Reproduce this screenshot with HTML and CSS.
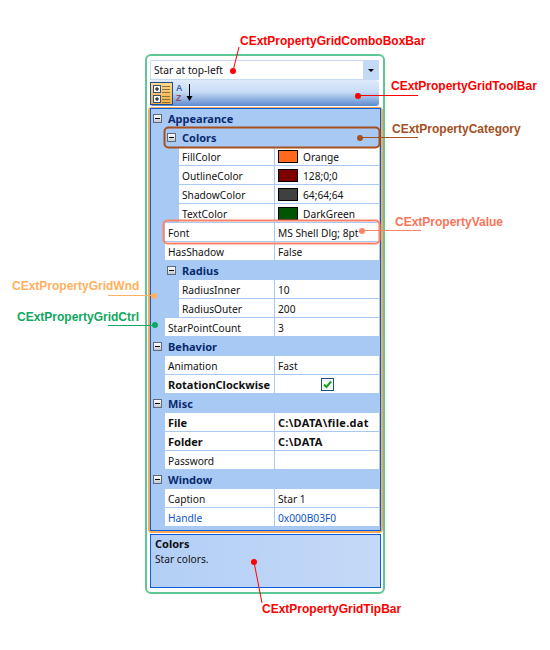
FILE: index.html
```html
<html>
    <head>
        <title>Property Grid</title>
        <meta name="viewport" content="width=device-width, initial-scale=1.0">
        <link rel="stylesheet" href="styles.css">
    </head>
    <body>
        <div class="page">
            <div class="frame">
                <div class="combo">
                    <span class="combo-text">Star at top-left</span>
                    <span class="combo-btn"><i class="combo-arrow"></i></span>
                </div>
                <div class="toolbar">
                    <span class="tool-btn">
                        <svg width="21" height="21" viewBox="0 0 21 21">
                            <rect x="2.500" y="2.500" width="7" height="7" fill="#fff" stroke="#33507a"/>
                            <path d="M4 6h4M6 4v4" stroke="#000"/>
                            <rect x="2.500" y="12.500" width="7" height="7" fill="#fff" stroke="#33507a"/>
                            <path d="M4 16h4M6 14v4" stroke="#000"/>
                            <path d="M11 3.500h8M11 6.500h8M11 9.500h8M11 13.500h8M11 16.500h8M11 19.500h8" stroke="#8a7440"/>
                        </svg>
                    </span>
                    <span class="sort-letters">
                        <span class="sort-a">A</span>
                        <span class="sort-z">Z</span>
                    </span>
                    <svg class="sort-arrow" width="7" height="18" viewBox="0 0 7 18">
                        <path d="M3.500 0v14" stroke="#000"/>
                        <path d="M0.500 12l3 5 3-5z" fill="#000"/>
                    </svg>
                </div>
                <div class="grid-wnd">
                    <div class="grid">
                        <div class="row cat"><b class="toggle"></b><span>Appearance</span></div>
                        <div class="row cat sub"><b class="toggle"></b><span>Colors</span></div>
                        <div class="row deep"><span class="name">FillColor</span><span class="value"><i class="swatch orange"></i>Orange</span></div>
                        <div class="row deep"><span class="name">OutlineColor</span><span class="value"><i class="swatch maroon"></i>128;0;0</span></div>
                        <div class="row deep"><span class="name">ShadowColor</span><span class="value"><i class="swatch gray"></i>64;64;64</span></div>
                        <div class="row deep"><span class="name">TextColor</span><span class="value"><i class="swatch green"></i>DarkGreen</span></div>
                        <div class="row"><span class="name">Font</span><span class="value">MS Shell Dlg; 8pt</span></div>
                        <div class="row"><span class="name">HasShadow</span><span class="value">False</span></div>
                        <div class="row cat sub"><b class="toggle"></b><span>Radius</span></div>
                        <div class="row deep"><span class="name">RadiusInner</span><span class="value">10</span></div>
                        <div class="row deep"><span class="name">RadiusOuter</span><span class="value">200</span></div>
                        <div class="row"><span class="name">StarPointCount</span><span class="value">3</span></div>
                        <div class="row cat"><b class="toggle"></b><span>Behavior</span></div>
                        <div class="row"><span class="name">Animation</span><span class="value">Fast</span></div>
                        <div class="row"><span class="name bold">RotationClockwise</span><span class="value center"><i class="check"><svg width="11" height="11" viewBox="0 0 11 11"><path d="M2 5.500l2.500 2.500 4.500-5.500" fill="none" stroke="#1aa31a" stroke-width="2"/></svg></i></span></div>
                        <div class="row cat"><b class="toggle"></b><span>Misc</span></div>
                        <div class="row"><span class="name bold">File</span><span class="value bold wide">C:\DATA\file.dat</span></div>
                        <div class="row"><span class="name bold">Folder</span><span class="value bold wide">C:\DATA</span></div>
                        <div class="row"><span class="name">Password</span><span class="value"></span></div>
                        <div class="row cat"><b class="toggle"></b><span>Window</span></div>
                        <div class="row"><span class="name">Caption</span><span class="value">Star 1</span></div>
                        <div class="row link"><span class="name">Handle</span><span class="value">0x000B03F0</span></div>
                    </div>
                </div>
                <div class="tipbar">
                    <div class="tip-title">Colors</div>
                    <div>Star colors.</div>
                </div>
            </div>

            <svg class="marks" width="550" height="650" viewBox="0 0 550 650">
                <rect x="164.500" y="127.500" width="215" height="20" rx="4" fill="none" stroke="#a5501f" stroke-width="2"/>
                <rect x="163.500" y="220.500" width="216" height="23" rx="4" fill="none" stroke="#ff8468" stroke-width="2"/>
                <path d="M233 71L239 47" stroke="#f00"/>
                <path d="M358 95.500H418" stroke="#f00"/>
                <path d="M360 137.500H418" stroke="#a5501f"/>
                <path d="M362 230.500H421" stroke="#ff8468"/>
                <path d="M108 295.500H154" stroke="#ffb060"/>
                <path d="M108 325.500H155" stroke="#10a860"/>
                <path d="M254 562L262 603" stroke="#f00"/>
                <circle cx="233" cy="71" r="3" fill="#f00"/>
                <circle cx="358" cy="96" r="3" fill="#f00"/>
                <circle cx="360" cy="138" r="3" fill="#a5501f"/>
                <circle cx="362" cy="231" r="3" fill="#ff8468"/>
                <circle cx="154" cy="296" r="3" fill="#ffb060"/>
                <circle cx="155" cy="325" r="3" fill="#10a860"/>
                <circle cx="254" cy="562" r="3" fill="#f00"/>
            </svg>

            <span class="label red combo-label">CExtPropertyGridComboBoxBar</span>
            <span class="label red toolbar-label">CExtPropertyGridToolBar</span>
            <span class="label brown category-label">CExtPropertyCategory</span>
            <span class="label salmon value-label">CExtPropertyValue</span>
            <span class="label amber wnd-label">CExtPropertyGridWnd</span>
            <span class="label emerald ctrl-label">CExtPropertyGridCtrl</span>
            <span class="label red tip-label">CExtPropertyGridTipBar</span>
        </div>
    </body>
</html>
```

FILE: styles.css
```css
* {
    box-sizing: border-box;
}

html, body {
    margin: 0;
    padding: 0;
    background: #fff;
}

.page {
    position: relative;
    width: 550px;
    height: 650px;
    padding: 54px 0 0 145px;
    font-family: "Noto Sans", "Liberation Sans", sans-serif;
    font-size: 10.200px;
    color: #111;
    overflow: hidden;
}

.frame {
    width: 240px;
    height: 540px;
    border: 2px solid #5fc795;
    border-radius: 6px;
    padding: 4px 3px 0 3px;
}

.combo {
    display: flex;
    align-items: stretch;
    justify-content: space-between;
    width: 229px;
    height: 20px;
    border: 1px solid #c6daf5;
    background: #fff;
}

.combo-text {
    padding: 2px 0 0 3px;
}

.combo-btn {
    display: flex;
    align-items: center;
    justify-content: center;
    width: 15px;
    background: #c3d9f6;
}

.combo-arrow {
    border-top: 3px solid #000;
    border-left: 3px solid transparent;
    border-right: 3px solid transparent;
}

.toolbar {
    display: flex;
    align-items: flex-end;
    width: 229px;
    height: 26px;
    border-radius: 3px;
    background: linear-gradient(#dfeafb, #c9dcf6 45%, #5d8bd0);
}

.tool-btn {
    display: flex;
    width: 23px;
    height: 23px;
    margin-bottom: 1px;
    align-items: center;
    justify-content: center;
    border: 1px solid #1e4f93;
    background: linear-gradient(#ffd98a, #f7a93e);
}

.sort-letters {
    display: flex;
    flex-direction: column;
    margin: 0 0 3px 3px;
    font-family: "Liberation Sans", sans-serif;
    font-size: 8.800px;
    font-weight: bold;
}

.sort-a, .sort-z {
    display: block;
    height: 10px;
    line-height: 10px;
}

.sort-a {
    color: #3c62b4;
}

.sort-z {
    color: #9b4a55;
}

.sort-arrow {
    margin: 0 0 4px 4px;
}

.grid-wnd {
    width: 235px;
    height: 426px;
    margin: 1px 0 0 -2px;
    border: 2px solid #f9a85c;
    border-top-width: 1px;
    border-radius: 4px;
}

.grid {
    width: 231px;
    height: 423px;
    border: 1px solid #0b5ed7;
    background: #a9c9f5;
}

.row {
    display: flex;
    height: 19px;
    padding: 0 0 1px 14px;
}

.row.deep {
    padding-left: 28px;
}

.name, .value {
    display: flex;
    align-items: center;
    background: #fff;
    white-space: nowrap;
    padding: 1px 0 0 3px;
}

.name {
    width: 109px;
    margin-right: 1px;
}

.deep .name {
    width: 95px;
}

.value {
    width: 104px;
}

.value.center {
    justify-content: center;
    padding: 0;
}

.name.bold, .value.bold {
    padding-top: 0;
    font-size: 11px;
    font-weight: bold;
}

.wide {
    letter-spacing: 0.3px;
}

.link .name, .link .value {
    color: #0f55c8;
}

.cat {
    align-items: center;
    padding: 0 0 1px 2px;
    font-size: 11px;
    font-weight: bold;
    color: #0a2a6e;
}

.cat.sub {
    padding-left: 16px;
}

.toggle {
    position: relative;
    width: 9px;
    height: 9px;
    margin-right: 6px;
    border: 1px solid #5b6a80;
    background: linear-gradient(#fff, #c4c8cc);
}

.toggle::after {
    content: "";
    position: absolute;
    left: 1px;
    top: 3px;
    width: 5px;
    height: 1px;
    background: #000;
}

.swatch {
    width: 20px;
    height: 13px;
    margin-right: 5px;
    border: 1px solid #000;
}

.swatch.orange {
    background: #ff6a1f;
}

.swatch.maroon {
    background: #800000;
}

.swatch.gray {
    background: #404040;
}

.swatch.green {
    background: #005500;
}

.check {
    display: flex;
    align-items: center;
    justify-content: center;
    width: 13px;
    height: 13px;
    border: 1px solid #1c5180;
    background: #f4f7f8;
}

.tipbar {
    width: 231px;
    height: 54px;
    margin-top: 1px;
    border: 1px solid #0b5ed7;
    padding: 1px 4px;
    background: linear-gradient(90deg, #b3cff5, #c4d9f7);
}

.tip-title {
    font-size: 11px;
    font-weight: bold;
    margin-bottom: 1px;
}

/* annotations drawn over the screenshot */
.marks {
    position: absolute;
    left: 0;
    top: 0;
}

.label {
    position: absolute;
    font-family: "Liberation Sans", sans-serif;
    font-size: 12px;
    font-weight: bold;
    line-height: 14px;
    white-space: nowrap;
}

.red {
    color: #f00;
}

.brown {
    color: #a5501f;
}

.salmon {
    color: #fa7458;
}

.amber {
    color: #ffb060;
}

.emerald {
    color: #10a860;
}

.combo-label {
    left: 240px;
    top: 34px;
}

.toolbar-label {
    left: 391px;
    top: 79px;
}

.category-label {
    left: 392px;
    top: 122px;
}

.value-label {
    left: 395px;
    top: 215px;
}

.wnd-label {
    left: 12px;
    top: 279px;
}

.ctrl-label {
    left: 17px;
    top: 310px;
}

.tip-label {
    left: 262px;
    top: 602px;
}
```
